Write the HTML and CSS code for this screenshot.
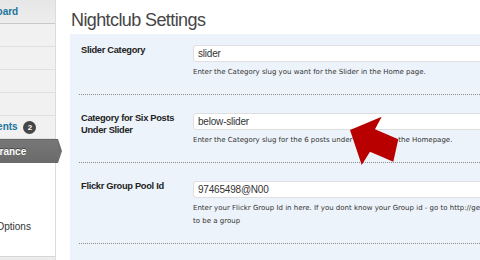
FILE: index.html
```html
<!DOCTYPE html>
<html lang="en">
<head>
  <meta charset="UTF-8" />
  <meta name="viewport" content="width=device-width, initial-scale=1.0"/>
  <title>Nightclub Settings</title>
  <link rel="stylesheet" href="styles.css">
</head>
<body>
  <div class="wrap">
    <nav class="adminmenu">
      <ul class="menu">
        <li class="menu-item dashboard"><a href="#">Dashboard</a></li>
        <li class="menu-sep"></li>
        <li class="menu-item"><a href="#">Posts</a></li>
        <li class="menu-item"><a href="#">Media</a></li>
        <li class="menu-item"><a href="#">Links</a></li>
        <li class="menu-item"><a href="#">Pages</a></li>
        <li class="menu-item"><a href="#">Comments <span class="count">2</span></a></li>
        <li class="menu-item current">
          <a href="#">Appearance</a>
          <ul class="submenu">
            <li><a href="#">Themes</a></li>
            <li><a href="#">Widgets</a></li>
            <li><a href="#">Menus</a></li>
            <li><a href="#">Nightclub Options</a></li>
            <li><a href="#">Editor</a></li>
          </ul>
        </li>
        <li class="menu-item plugins"><a href="#">Plugins <span class="count">1</span></a></li>
      </ul>
    </nav>

    <main class="content">
      <h1>Nightclub Settings</h1>
      <div class="panel">
        <div class="row">
          <label for="slider-cat">Slider Category</label>
          <div class="field">
            <input class="input" id="slider-cat" type="text" value="slider" />
            <p class="desc">Enter the Category slug you want for the Slider in the Home page.</p>
          </div>
        </div>

        <div class="row">
          <label for="six-cat">Category for Six Posts Under Slider</label>
          <div class="field">
            <input class="input" id="six-cat" type="text" value="below-slider" />
            <p class="desc">Enter the Category slug for the 6 posts under the slider in the Homepage.</p>
          </div>
        </div>

        <div class="row">
          <label for="flickr-id">Flickr Group Pool Id</label>
          <div class="field">
            <input class="input" id="flickr-id" type="text" value="97465498@N00" />
            <p class="desc">Enter your Flickr Group Id in here. If you dont know your Group id - go to http://getidee.com/ and find it. The pool has<br>to be a group</p>
          </div>
        </div>
      </div>
    </main>
  </div>

  <!-- red pointer drawn on top of the screenshot -->
  <svg class="pointer" width="480" height="260" viewBox="0 0 480 260">
    <polygon points="350,130 381.7,116.7 375,129.3 398.3,139.3 393.3,161.7 370,151.7 361.7,165" fill="#b80000"/>
  </svg>
</body>
</html>
```

FILE: styles.css
```css
* {
  box-sizing: border-box;
}

html, body {
  margin: 0;
  height: 100%;
  overflow: hidden;
  background: #fff;
}

body {
  font-family: "Liberation Sans", Arial, sans-serif;
  color: #333;
  position: relative;
}

.wrap {
  display: flex;
  margin-left: -90px;
  width: 1000px;
  min-height: 260px;
}

/* admin sidebar, only its right end is on screen */
.adminmenu {
  width: 146px;
  flex: none;
  background: #f1f1f1;
  border-right: 1px solid #dcdcdc;
}

.menu, .submenu {
  list-style: none;
  margin: 0;
  padding: 0;
}

.menu-item > a {
  display: block;
  height: 23px;
  line-height: 22px;
  padding-left: 56px;
  font-size: 10px;
  font-weight: bold;
  color: #21759b;
  text-decoration: none;
  white-space: nowrap;
  border-bottom: 1px solid #e0e0e0;
}

.dashboard > a {
  background: linear-gradient(#e6e6e6, #ededed);
  line-height: 24px;
  border-bottom: none;
}

.menu-sep {
  height: 1px;
  background: #c8c8c8;
}

.count {
  display: inline-block;
  min-width: 13px;
  height: 13px;
  margin-left: 3px;
  border-radius: 7px;
  background: #464646;
  color: #fff;
  font-size: 8px;
  line-height: 13px;
  text-align: center;
  vertical-align: middle;
}

.current > a {
  position: relative;
  height: 24px;
  line-height: 24px;
  padding-left: 59px;
  margin-right: -3px;
  background: linear-gradient(#777, #6a6a6a);
  border-top: 1px solid #666;
  border-bottom: none;
  color: #fff;
  text-shadow: 0 -1px 0 #444;
}

.current > a::after {
  content: "";
  position: absolute;
  top: -1px;
  right: -4px;
  border-left: 4px solid #6f6f6f;
  border-top: 12px solid transparent;
  border-bottom: 12px solid transparent;
}

.submenu {
  background: #fff;
  padding: 4px 0;
}

.submenu a {
  display: block;
  height: 17px;
  line-height: 17px;
  padding-left: 42px;
  font-size: 10px;
  color: #333;
  text-decoration: none;
  white-space: nowrap;
}

.plugins > a {
  background: linear-gradient(#ededed, #e6e6e6);
  border-top: 1px solid #d6d6d6;
}

/* settings page */
.content {
  flex: 1;
  padding-left: 14px;
}

h1 {
  margin: 10px 0 3px 1px;
  font-size: 18px;
  font-weight: normal;
  letter-spacing: -0.6px;
  line-height: 21px;
  color: #464646;
}

.panel {
  background: #edf3fa;
  padding: 0 0 20px 9px;
}

.row {
  display: grid;
  grid-template-columns: 114px 1fr;
  padding: 17px 0 15px;
  border-bottom: 1px dotted #8c8c8c;
}

.row:first-child {
  padding-top: 10px;
}

.row label {
  padding-left: 2px;
  font-size: 9.3px;
  font-weight: bold;
  letter-spacing: -0.3px;
  line-height: 12px;
  color: #222;
}

.input {
  display: block;
  width: 100%;
  height: 17px;
  margin: 1px 0 0;
  padding: 0 4px;
  border: 1px solid #dfdfdf;
  border-radius: 3px;
  background: #fff;
  font-family: "Liberation Sans", Arial, sans-serif;
  font-size: 10px;
  letter-spacing: -0.2px;
  color: #333;
}

.desc {
  margin: 4px 0 0;
  font-family: "DejaVu Sans", Verdana, sans-serif;
  font-size: 7px;
  line-height: 13px;
  color: #333;
  white-space: nowrap;
}

.pointer {
  position: absolute;
  top: 0;
  left: 0;
  pointer-events: none;
}
```
